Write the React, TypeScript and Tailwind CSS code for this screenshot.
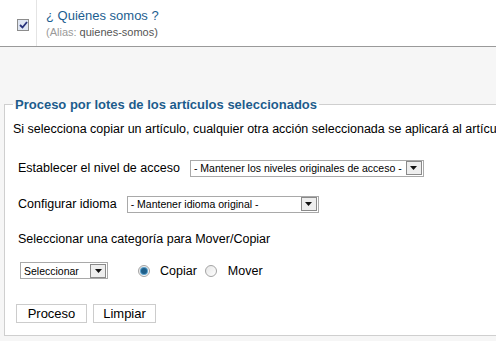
import React from "react";

function Arrow() {
  return (
    <span className="flex h-[14px] w-[16px] items-center justify-center border border-[#8a8a8a] bg-[#eeeeee]">
      <svg width="7" height="4" viewBox="0 0 7 4">
        <polygon points="0,0 7,0 3.5,4" fill="#111" />
      </svg>
    </span>
  );
}

function Select({ text, width }: { text: string; width: string }) {
  return (
    <div className={`flex h-[17px] items-center justify-between border border-[#a9a9a9] bg-white pl-[3px] pr-[1px] ${width}`}>
      <span className="text-[10.5px] leading-none text-black">{text}</span>
      <Arrow />
    </div>
  );
}

function Radio({ checked }: { checked?: boolean }) {
  return (
    <span className="flex h-[12px] w-[12px] items-center justify-center rounded-full border border-[#a4a4a4] bg-gradient-to-br from-[#e6e6e6] to-white">
      {checked && <span className="h-[6px] w-[6px] rounded-full bg-[#1e5f8a] ring-1 ring-[#5aa0cc]" />}
    </span>
  );
}

export default function App() {
  return (
    <div className="h-[341px] w-[496px] overflow-hidden bg-[#f6f6f6] text-black" style={{ fontFamily: '"Liberation Sans", Arial, sans-serif' }}>
      <div className="flex h-[47px] border-b border-[#9a9a9a] bg-white">
        <div className="flex w-[37px] items-center border-r border-[#e4e4e4] pl-[17px] pt-[4px]">
          <span className="flex h-[12px] w-[12px] items-center justify-center border border-[#8c8c8c] bg-[#dfe6f3]">
            <svg width="9" height="8" viewBox="0 0 9 8">
              <path d="M1 4 L3.5 6.5 L8 1" stroke="#26307a" strokeWidth="1.8" fill="none" />
            </svg>
          </span>
        </div>
        <div className="pl-[9px] pt-[8px]">
          <div className="text-[13px] leading-[16px] text-[#1b5e90]">¿ Quiénes somos ?</div>
          <div className="mt-[1px] text-[11px] leading-[14px] text-[#555]">
            <span className="text-[#9a9a9a]">(Alias:</span> quienes-somos)
          </div>
        </div>
      </div>

      <fieldset className="ml-[4px] mt-[50px] h-[239px] w-[520px] border border-[#cfcfcf] bg-white pl-[8px] text-[12.5px]">
        <legend className="px-[2px] text-[13px] font-bold leading-[15px] text-[#1d5c8c]">
          Proceso por lotes de los artículos seleccionados
        </legend>
        <p className="mt-[10px] whitespace-nowrap leading-[15px]">
          Si selecciona copiar un artículo, cualquier otra acción seleccionada se aplicará al artículo copiado.
        </p>

        <div className="ml-[5px] mt-[22px] flex items-center gap-[10px]">
          <span>Establecer el nivel de acceso</span>
          <Select text="- Mantener los niveles originales de acceso -" width="w-[234px]" />
        </div>

        <div className="ml-[5px] mt-[17px] flex items-center gap-[10px]">
          <span>Configurar idioma</span>
          <Select text="- Mantener idioma original -" width="w-[192px]" />
        </div>

        <div className="ml-[5px] mt-[18px] leading-[15px]">Seleccionar una categoría para Mover/Copiar</div>

        <div className="ml-[7px] mt-[15px] flex items-center">
          <Select text="Seleccionar" width="w-[88px]" />
          <span className="ml-[30px] flex items-center gap-[10px]">
            <Radio checked />
            <span>Copiar</span>
          </span>
          <span className="ml-[8px] flex items-center gap-[11px]">
            <Radio />
            <span>Mover</span>
          </span>
        </div>

        <div className="ml-[3px] mt-[24px] flex gap-[6px]">
          <button className="h-[19px] w-[71px] border border-[#cccccc] bg-white text-[13px] leading-none">Proceso</button>
          <button className="h-[19px] w-[63px] border border-[#cccccc] bg-white text-[13px] leading-none">Limpiar</button>
        </div>
      </fieldset>
    </div>
  );
}
